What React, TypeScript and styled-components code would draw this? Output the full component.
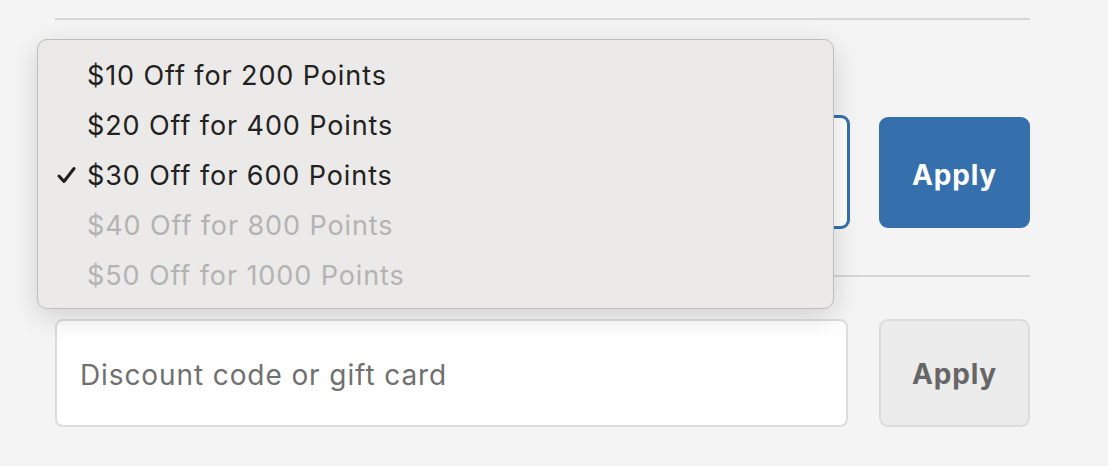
import styled, { createGlobalStyle } from "styled-components";

const GlobalStyle = createGlobalStyle`
	html, body {
		margin: 0;
		padding: 0;
		background: #f4f4f4;
		font-family: Inter, "Noto Sans", sans-serif;
	}
`;

interface Reward {
	label: string;
	selected?: boolean;
	disabled?: boolean;
}

const rewards: Reward[] = [
	{ label: "$10 Off for 200 Points" },
	{ label: "$20 Off for 400 Points" },
	{ label: "$30 Off for 600 Points", selected: true },
	{ label: "$40 Off for 800 Points", disabled: true },
	{ label: "$50 Off for 1000 Points", disabled: true },
];

export default function App() {
	return (
		<>
			<GlobalStyle />
			<Page>
				<Section>
					<Divider />
					<RewardRow>
						<SelectBox />
						<ApplyButton $primary>Apply</ApplyButton>
					</RewardRow>
					<Divider />
					<CodeRow>
						<CodeInput type="text" placeholder="Discount code or gift card" />
						<ApplyButton>Apply</ApplyButton>
					</CodeRow>
					<Menu>
						{rewards.map((r) => (
							<MenuItem key={r.label} $disabled={r.disabled}>
								<Check>
									{r.selected && (
										<svg width="19" height="18" viewBox="0 0 19 18">
											<polyline
												points="2,10 7,15.5 17,2.5"
												fill="none"
												stroke="#1e1e1e"
												strokeWidth="3"
												strokeLinecap="round"
												strokeLinejoin="round"
											/>
										</svg>
									)}
								</Check>
								{r.label}
							</MenuItem>
						))}
					</Menu>
				</Section>
			</Page>
		</>
	);
}

const Page = styled.div`
	width: 1108px;
	height: 466px;
	padding: 18px 0 0 55px;
	box-sizing: border-box;
`;

const Section = styled.div`
	position: relative;
	width: 975px;
	display: flex;
	flex-direction: column;
`;

const Divider = styled.hr`
	margin: 0;
	border: none;
	height: 2px;
	background: #d6d6d6;
`;

const RewardRow = styled.div`
	display: flex;
	align-items: center;
	gap: 29px;
	margin: 95px 0 46px;
`;

const CodeRow = styled.div`
	display: flex;
	align-items: center;
	gap: 31px;
	margin-top: 42px;
`;

const SelectBox = styled.div`
	width: 795px;
	height: 114px;
	box-sizing: border-box;
	border: 3px solid #3670ac;
	border-radius: 9px;
	background: #ffffff;
`;

const CodeInput = styled.input`
	width: 793px;
	height: 108px;
	box-sizing: border-box;
	border: 2px solid #dcdcdc;
	border-radius: 8px;
	background: #ffffff;
	padding: 4px 23px 0;
	font-family: Inter, "Noto Sans", sans-serif;
	font-size: 28px;
	letter-spacing: 0.9px;
	color: #333;
	outline: none;

	&::placeholder {
		color: #707070;
	}
`;

const ApplyButton = styled.button<{ $primary?: boolean }>`
	width: 151px;
	height: ${({ $primary }) => ($primary ? "111px" : "108px")};
	box-sizing: border-box;
	border-radius: 9px;
	border: 2px solid ${({ $primary }) => ($primary ? "#3670ac" : "#dcdcdc")};
	background: ${({ $primary }) => ($primary ? "#3670ac" : "#ececec")};
	color: ${({ $primary }) => ($primary ? "#ffffff" : "#666666")};
	font-family: Inter, "Noto Sans", sans-serif;
	font-size: 28px;
	letter-spacing: 0.8px;
	font-weight: 700;
	padding: ${({ $primary }) => ($primary ? "5px 0 0" : "1px 0 0")};
`;

const Menu = styled.div`
	position: absolute;
	left: -18px;
	top: 21px;
	width: 797px;
	height: 270px;
	box-sizing: border-box;
	padding: 10px 0 0;
	background: #ebeae8;
	border: 1px solid #bdbdbd;
	border-radius: 10px;
	box-shadow: 0 8px 28px rgba(0, 0, 0, 0.14);
	display: flex;
	flex-direction: column;
`;

const MenuItem = styled.div<{ $disabled?: boolean }>`
	height: 50px;
	display: flex;
	align-items: center;
	font-size: 27px;
	letter-spacing: 0.9px;
	color: ${({ $disabled }) => ($disabled ? "#b3b3b3" : "#222222")};
`;

const Check = styled.span`
	width: 49px;
	padding-left: 19px;
	box-sizing: border-box;
	display: flex;
	align-items: center;
`;
